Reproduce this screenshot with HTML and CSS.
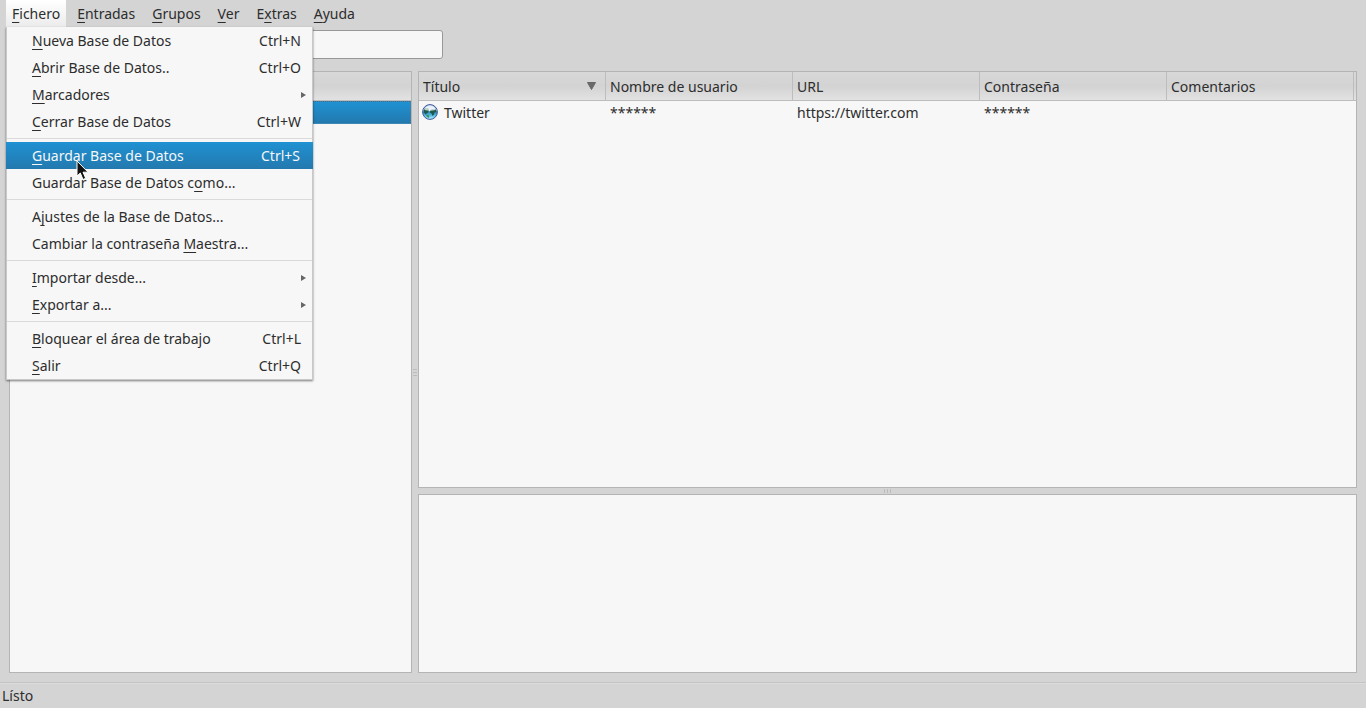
FILE: index.html
```
<!DOCTYPE html>
<html lang="es">
<head>
  <meta charset="UTF-8" />
  <meta name="viewport" content="width=device-width, initial-scale=1" />
  <title>Base de Datos</title>
  <link rel="stylesheet" href="styles.css">
</head>
<body>

  <!-- Menu bar -->
  <nav class="menubar">
    <div class="menu-wrap">
      <button class="menu-title open"><u>F</u>ichero</button>

      <!-- Open "Fichero" menu -->
      <div class="menu">
        <button class="item"><span><u>N</u>ueva Base de Datos</span><span>Ctrl+N</span></button>
        <button class="item"><span><u>A</u>brir Base de Datos..</span><span>Ctrl+O</span></button>
        <button class="item sub"><span><u>M</u>arcadores</span><i class="arrow"></i></button>
        <button class="item"><span><u>C</u>errar Base de Datos</span><span>Ctrl+W</span></button>
        <hr>
        <button class="item active"><span><u>G</u>uardar Base de Datos</span><span>Ctrl+S</span></button>
        <button class="item"><span>Guardar Base de Datos c<u>o</u>mo...</span></button>
        <hr>
        <button class="item"><span>A<u>j</u>ustes de la Base de Datos...</span></button>
        <button class="item"><span>Cambiar la contraseña <u>M</u>aestra...</span></button>
        <hr>
        <button class="item sub"><span><u>I</u>mportar desde...</span><i class="arrow"></i></button>
        <button class="item sub"><span><u>E</u>xportar a...</span><i class="arrow"></i></button>
        <hr>
        <button class="item"><span><u>B</u>loquear el área de trabajo</span><span>Ctrl+L</span></button>
        <button class="item"><span><u>S</u>alir</span><span>Ctrl+Q</span></button>
      </div>
    </div>
    <button class="menu-title"><u>E</u>ntradas</button>
    <button class="menu-title"><u>G</u>rupos</button>
    <button class="menu-title"><u>V</u>er</button>
    <button class="menu-title">E<u>x</u>tras</button>
    <button class="menu-title"><u>A</u>yuda</button>
  </nav>

  <!-- Toolbar -->
  <div class="toolbar">
    <input class="search" type="text" aria-label="Buscar">
  </div>

  <!-- Panels -->
  <main class="panels">
    <section class="panel groups">
      <div class="groups-head"></div>
      <div class="group-row"></div>
    </section>

    <div class="split split-v"><i></i><i></i><i></i></div>

    <section class="panel entries">
      <table>
        <thead>
          <tr>
            <th><div class="sorted">Título <svg width="9" height="8" viewBox="0 0 9 8"><path d="M0.5 0.5h8L4.5 7.5z" fill="#6a6a6a" stroke="#666"/></svg></div></th>
            <th>Nombre de usuario</th>
            <th>URL</th>
            <th>Contraseña</th>
            <th>Comentarios</th>
            <th class="spare"></th>
          </tr>
        </thead>
        <tbody>
          <tr>
            <td>
              <div class="entry">
                <svg class="globe" width="16" height="16" viewBox="0 0 16 16">
                  <defs>
                    <linearGradient id="sea" x1="0" y1="0" x2="0" y2="1">
                      <stop offset="0" stop-color="#a9c4e4"/>
                      <stop offset="0.4" stop-color="#c9e2f0"/>
                      <stop offset="0.5" stop-color="#2f86c0"/>
                      <stop offset="0.75" stop-color="#5cc0e4"/>
                      <stop offset="1" stop-color="#b8f6ff"/>
                    </linearGradient>
                  </defs>
                  <circle cx="8" cy="8" r="7.4" fill="url(#sea)" stroke="#3f5499"/>
                  <path d="M1.500 6.500L3 4.500l3-.5 1 1.500L6.500 8l-2 1.500L4 11 2 8.500z" fill="#1c5a4c"/>
                  <path d="M8 6.500L10 5l4 .5.500 2.500-2 .5-.500 2-1.500 1.500-1-2.500L8 8.500z" fill="#1c5a4c"/>
                  <path d="M4 11l2-.5 1.500 1.500L6.500 14 5 13z" fill="#3f9464"/>
                  <path d="M2.500 6Q4 1.500 8 1.500T13.500 6Q8 7.500 2.500 6z" fill="#fff" opacity="0.7"/>
                </svg>
                Twitter
              </div>
            </td>
            <td>******</td>
            <td>https://twitter.com</td>
            <td>******</td>
            <td></td>
            <td class="spare"></td>
          </tr>
        </tbody>
      </table>
    </section>

    <div class="split split-h"><i></i><i></i><i></i></div>

    <section class="panel detail"></section>
  </main>

  <footer class="statusbar">Lísto</footer>

  <!-- Mouse pointer -->
  <svg class="pointer" width="13" height="21" viewBox="0 0 13 21">
    <path d="M1 1v15l3.300-3 2.700 6.500 2.700-1.200L7 12.200h5z" fill="#111" stroke="#fff" stroke-width="1"/>
  </svg>

</body>
</html>
```
FILE: styles.css
```
* {
  margin: 0;
  padding: 0;
  box-sizing: border-box;
}

body {
  height: 100vh;
  display: flex;
  flex-direction: column;
  overflow: hidden;
  background: #d4d4d4;
  color: #2d2d2d;
  font-family: 'Noto Sans', 'Open Sans', sans-serif;
  font-size: 14px;
  line-height: 20px;
}

button,
input {
  font: inherit;
  color: inherit;
  border: none;
  background: none;
}

u {
  text-decoration-thickness: 1px;
  text-underline-offset: 3px;
  text-decoration-skip-ink: none;
}

/* Menu bar */
.menubar {
  display: flex;
  gap: 5px;
  height: 28px;
  padding-left: 6px;
}

.menu-wrap {
  position: relative;
}

.menu-title {
  height: 27px;
  padding: 0 6px;
}

.menu-title.open {
  background: linear-gradient(#ffffff, #ebebeb);
}

/* Drop-down menu */
.menu {
  position: absolute;
  top: 27px;
  left: 0;
  width: 307px;
  z-index: 2;
  background: #f7f7f7;
  border: 1px solid #c8c8c8;
  border-top: none;
  box-shadow: 0 1px 2px rgba(0, 0, 0, 0.5);
}

.item {
  display: flex;
  justify-content: space-between;
  align-items: center;
  width: 100%;
  height: 27px;
  padding: 0 11px 0 25px;
}

.item.sub {
  padding-right: 6px;
}

.item.active {
  width: calc(100% + 2px);
  margin: 0 -1px;
  padding: 0 13px 0 26px;
  color: #f7f7f7;
  background: linear-gradient(#1f91d2, #2379ae);
}

.menu hr {
  height: 1px;
  margin: 3px 0;
  border: none;
  background: #dadada;
}

.arrow {
  border: 3px solid transparent;
  border-left: 5px solid #666;
  border-right: none;
}

/* Toolbar */
.toolbar {
  padding: 2px 0 12px 160px;
}

.search {
  display: block;
  width: 283px;
  height: 29px;
  padding: 0 6px;
  border: 1px solid #989898;
  border-radius: 3px;
  background: #f7f7f7;
}

/* Panels */
.panels {
  flex: 1;
  display: grid;
  grid-template-columns: 403fr 6px 939fr;
  grid-template-rows: 417fr 6px 179fr;
  padding: 0 9px;
}

.panel {
  border: 1px solid #b4b4b4;
  background: #f7f7f7;
}

.groups,
.split-v {
  grid-row: 1 / 4;
}

.groups-head,
th {
  height: 29px;
  border-bottom: 1px solid #bdbdbd;
  background: linear-gradient(#d8d8d8, #d3d3d3 50%, #e2e2e2);
}

.group-row {
  height: 23px;
  border: 1px dotted #5d7f94;
  background: linear-gradient(#1f91d2, #2379ae);
}

.split {
  display: flex;
  justify-content: center;
  align-items: center;
  gap: 2px;
}

.split i {
  background: #bcbcbc;
}

.split-v {
  flex-direction: column;
}

.split-v i {
  width: 4px;
  height: 1px;
}

.split-h i {
  width: 1px;
  height: 4px;
}

/* Entries table */
table {
  width: 100%;
  table-layout: fixed;
  border-collapse: separate;
  border-spacing: 0;
}

th {
  padding: 2px 0 0 4px;
  border-right: 1px solid #bdbdbd;
  font-weight: normal;
  text-align: left;
}

td {
  height: 24px;
  padding-left: 4px;
}

.spare {
  width: 2px;
  padding: 0;
  border-right: none;
}

.sorted {
  display: flex;
  justify-content: space-between;
  padding-right: 9px;
}

.sorted svg {
  margin-top: 5px;
}

.entry {
  display: flex;
  gap: 6px;
  margin-left: -1px;
}

.globe {
  margin-top: 1px;
}

/* Status bar */
.statusbar {
  height: 26px;
  margin-top: 9px;
  padding: 3px 2px;
  border-top: 1px solid #c4c4c4;
  box-shadow: inset 0 1px #dcdcdc;
}

.pointer {
  position: absolute;
  top: 160px;
  left: 76px;
  z-index: 3;
}
```
